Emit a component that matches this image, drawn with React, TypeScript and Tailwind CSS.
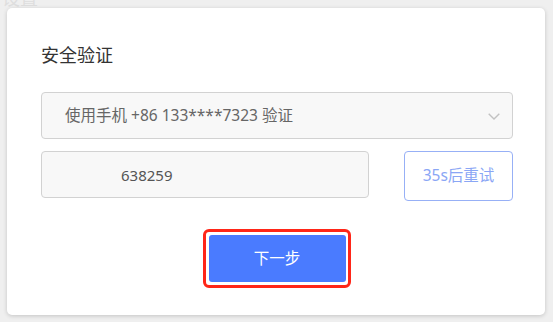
const font = { fontFamily: '"Noto Sans", "Noto Sans CJK SC", sans-serif' };

export default function App() {
  return (
    <div className="flex h-[322px] w-[553px] flex-col overflow-hidden bg-[#efefef]" style={font}>
      {/* page behind the dialog, mostly covered */}
      <div className="h-[8px] overflow-hidden pl-[2px]">
        <span className="-mt-[12px] block text-[18px] leading-[20px] text-[#dedede]">设置</span>
      </div>

      <div className="ml-[7px] flex h-[307px] w-[538px] flex-col rounded-[5px] bg-white pl-[34px] pr-[32px] pt-[35px] shadow-[0_1px_4px_rgba(0,0,0,0.18)]">
        <h2 className="text-[18px] leading-[24px] text-[#333]">安全验证</h2>

        <button className="mt-[25px] flex h-[47px] w-[472px] items-center justify-between rounded-[4px] border border-[#d2d2d2] bg-[#f8f8f8] pl-[23px] pr-[12px] text-left text-[15.5px] text-[#666]">
          <span>使用手机 +86 133****7323 验证</span>
          <svg width="12" height="7" viewBox="0 0 12 7" fill="none" className="mt-[1px]">
            <path d="M0.7 0.7 6 6 11.3 0.7" stroke="#c2c2c2" strokeWidth="1.4" />
          </svg>
        </button>

        <div className="mt-[12px] flex items-start justify-between">
          <input
            readOnly
            value="638259"
            className="h-[47px] w-[328px] rounded-[4px] border border-[#d2d2d2] bg-[#f8f8f8] pl-[79px] text-[15px] text-[#555] outline-none"
          />
          <button className="h-[50px] w-[109px] rounded-[4px] border border-[#97b0f6] bg-white text-[15.5px] text-[#8aa6f5]">
            35s后重试
          </button>
        </div>

        <div className="mt-[28px] flex w-[472px] justify-center">
          <div className="rounded-[6px] border-[3px] border-[#ff2618] px-[2.5px] py-[3px]">
            <button className="h-[47px] w-[137px] rounded-[3px] bg-[#4a7bff] text-[15.5px] text-white">
              下一步
            </button>
          </div>
        </div>
      </div>
    </div>
  );
}
